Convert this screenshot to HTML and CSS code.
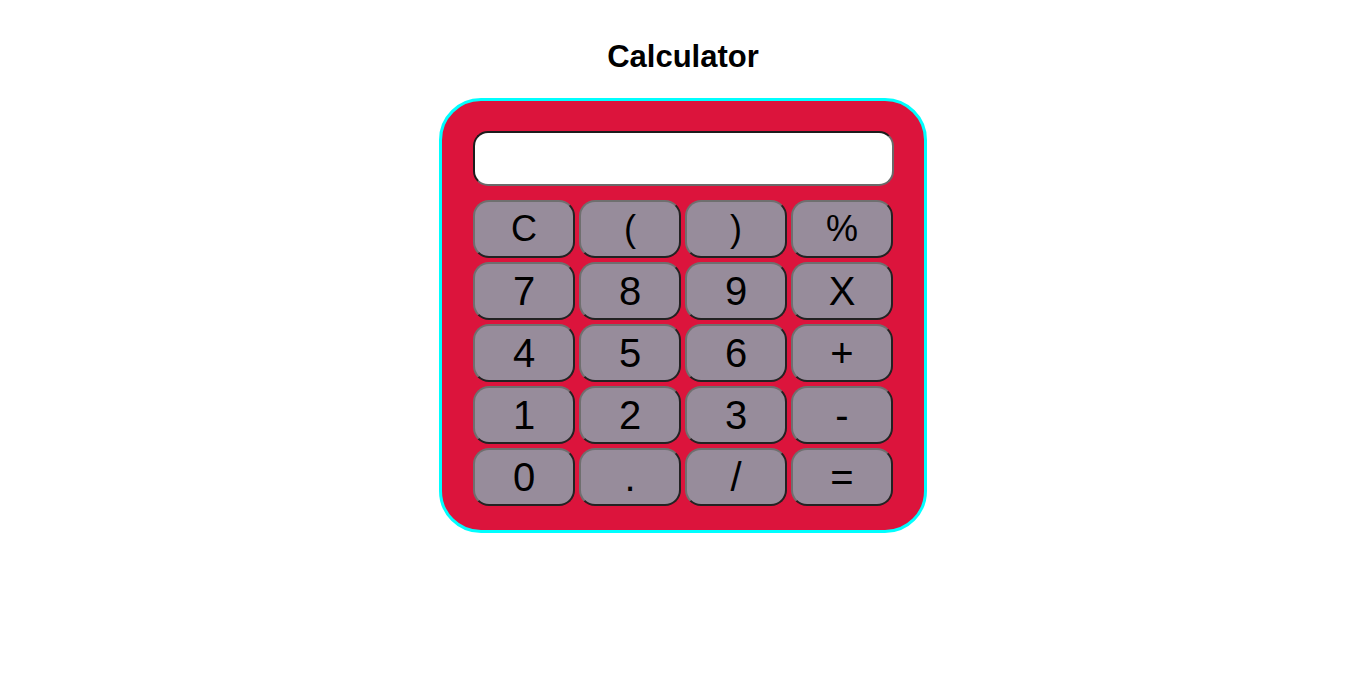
FILE: index.html
```html
<!DOCTYPE html>
<html>
<head>
<meta charset="utf-8">
<title>Calculator</title>
<link rel="stylesheet" href="styles.css">
</head>
<body>
<h1 class="title">Calculator</h1>
<div class="calc">
  <div class="display"></div>
  <div class="keys">
    <button class="key small">C</button>
    <button class="key small">(</button>
    <button class="key small">)</button>
    <button class="key small">%</button>
    <button class="key">7</button>
    <button class="key">8</button>
    <button class="key">9</button>
    <button class="key">X</button>
    <button class="key">4</button>
    <button class="key">5</button>
    <button class="key">6</button>
    <button class="key">+</button>
    <button class="key">1</button>
    <button class="key">2</button>
    <button class="key">3</button>
    <button class="key">-</button>
    <button class="key">0</button>
    <button class="key">.</button>
    <button class="key">/</button>
    <button class="key">=</button>
  </div>
</div>
</body>
</html>
```
FILE: styles.css
```css
html, body {
  margin: 0;
  padding: 0;
  background: #ffffff;
}
body {
  display: flex;
  flex-direction: column;
  align-items: center;
}
.title {
  font-family: "Comic Sans MS", "Liberation Sans", sans-serif;
  font-weight: bold;
  font-size: 31px;
  line-height: 40px;
  margin: 37px 0 21px;
  color: #000;
}
.calc {
  box-sizing: border-box;
  width: 488px;
  padding: 30px 31px 24px;
  background: #dc143c;
  border: 3px solid #00ffff;
  border-radius: 42px;
}
.display {
  box-sizing: border-box;
  height: 55px;
  width: 421px;
  background: #ffffff;
  border: 2px solid;
  border-color: #1c1c1c #6a6a6a #6a6a6a #1c1c1c;
  border-radius: 15px;
  margin-bottom: 14px;
}
.keys {
  display: grid;
  grid-template-columns: repeat(4, 102px);
  grid-auto-rows: 57.5px;
  column-gap: 4px;
  row-gap: 4.5px;
}
.key {
  box-sizing: border-box;
  margin: 0;
  padding: 0;
  background: #978c9b;
  border: 2px solid;
  border-color: #6f6f6f #222222 #222222 #6f6f6f;
  border-radius: 16px;
  font-family: "Liberation Sans", Arial, sans-serif;
  font-size: 40px;
  color: #000;
  line-height: 1;
}
.key.small {
  font-size: 36px;
}
```
